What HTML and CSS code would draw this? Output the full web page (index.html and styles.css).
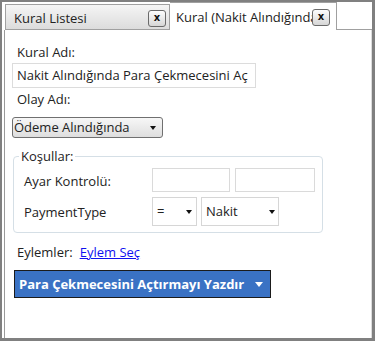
FILE: index.html
```html
<!DOCTYPE html>
<html lang="tr">
<head>
<meta charset="utf-8">
<title>Kural</title>
<link rel="stylesheet" href="styles.css">
</head>
<body>
<div class="window">
  <div class="tabs">
    <div class="tab tab-inactive">
      <span class="tab-title">Kural Listesi</span>
      <span class="tab-close">x</span>
    </div>
    <div class="tab tab-active">
      <span class="tab-title tab-title-clip">Kural (Nakit Alındığında Para Çekmecesini Aç)</span>
      <span class="tab-close">x</span>
    </div>
    <div class="tab-fill"></div>
  </div>
  <div class="panel">
    <div class="label">Kural Adı:</div>
    <div class="textbox">Nakit Alındığında Para Çekmecesini Aç</div>
    <div class="label label-gap">Olay Adı:</div>
    <div class="combo"><span>Ödeme Alındığında</span><span class="arrow"></span></div>
    <fieldset class="group">
      <legend class="group-title">Koşullar:</legend>
      <div class="row">
        <span class="row-label">Ayar Kontrolü:</span>
        <span class="field field-a"></span>
        <span class="field field-b"></span>
      </div>
      <div class="row row-second">
        <span class="row-label">PaymentType</span>
        <span class="mini-select mini-op"><span>=</span><span class="arrow"></span></span>
        <span class="mini-select mini-val"><span>Nakit</span><span class="arrow"></span></span>
      </div>
    </fieldset>
    <div class="actions"><span>Eylemler:</span><a class="link" href="#">Eylem Seç</a></div>
    <div class="action-btn"><span>Para Çekmecesini Açtırmayı Yazdır</span><span class="arrow arrow-white"></span></div>
  </div>
</div>
</body>
</html>
```
FILE: styles.css
```css
* { box-sizing: border-box; }
html, body { margin: 0; padding: 0; background: #fff; }
body {
  font-family: "Open Sans", "Noto Sans", sans-serif;
  font-size: 13px;
  line-height: 17px;
  color: #222;
}
.window {
  width: 375px;
  height: 341px;
  border-style: solid;
  border-color: #808080;
  border-width: 2px 3px 3px 2px;
  padding-left: 2px;
  display: flex;
  flex-direction: column;
  background: #fff;
}
.tabs {
  display: flex;
  align-items: flex-end;
  height: 28px;
  flex: none;
}
.tab {
  display: flex;
  align-items: center;
  border: 1px solid #a0a0a0;
  white-space: nowrap;
}
.tab-inactive {
  margin-left: 1px;
  width: 165px;
  height: 26px;
  background: linear-gradient(#f5f5f5, #dcdcdc);
  padding: 2px 3px 0 8px;
  justify-content: space-between;
}
.tab-active {
  width: 167px;
  height: 28px;
  border-left: none;
  border-bottom: none;
  background: #fff;
  padding: 2px 4px 0 6px;
}
.tab-title-clip {
  width: 136px;
  overflow: hidden;
}
.tab-close {
  width: 18px;
  height: 17px;
  border: 1px solid #6a6a6a;
  border-radius: 3px;
  background: linear-gradient(#fdfdfd, #d6d6d6);
  font-family: "DejaVu Sans", sans-serif;
  font-weight: bold;
  font-size: 10px;
  line-height: 14px;
  text-align: center;
  color: #111;
  flex: none;
}
.tab-fill {
  flex: 1;
  height: 28px;
  border-bottom: 1px solid #a0a0a0;
}
.panel {
  flex: 1;
  border-left: 1px solid #9a9a9a;
  border-right: 1px solid #dcdcdc;
  padding: 14px 0 0 7px;
}
.label {
  padding-left: 5px;
  height: 17px;
}
.label-gap { margin-top: 3px; }
.textbox {
  margin-top: 2px;
  width: 244px;
  height: 25px;
  border: 1px solid #dcdcdc;
  padding-left: 4px;
  display: flex;
  align-items: center;
  white-space: nowrap;
  overflow: hidden;
}
.combo {
  margin-top: 9px;
  width: 151px;
  height: 21px;
  border: 1px solid #707070;
  border-radius: 3px;
  background: linear-gradient(#f7f7f7, #dedede);
  padding: 0 6px 0 1px;
  display: flex;
  align-items: center;
  justify-content: space-between;
}
.arrow {
  width: 0;
  height: 0;
  border-left: 3.5px solid transparent;
  border-right: 3.5px solid transparent;
  border-top: 4px solid #111;
}
.group {
  margin: 10px 0 0 1px;
  width: 310px;
  padding: 3px 0 6px 0;
  border: 1px solid #d5dfe6;
  border-radius: 4px;
  min-width: 0;
}
.group-title {
  margin-left: 5px;
  padding: 0 2px;
}
.row {
  display: flex;
  align-items: center;
  padding-left: 10px;
  height: 24px;
}
.row-second {
  margin-top: 5px;
  height: 29px;
}
.row-label {
  width: 128px;
  padding-top: 2px;
}
.field {
  height: 24px;
  border: 1px solid #dadada;
  background: #fff;
}
.field-a { width: 78px; margin-right: 5px; }
.field-b { width: 80px; }
.mini-select {
  height: 29px;
  border: 1px solid #d6d6d6;
  background: #fff;
  display: flex;
  align-items: center;
  justify-content: space-between;
  padding: 0 4px;
}
.mini-op { width: 45px; margin-right: 4px; }
.mini-val { width: 78px; padding-right: 3px; }
.actions {
  margin-top: 11px;
  padding-left: 5px;
  height: 17px;
}
.link {
  margin-left: 7px;
  color: #1010f0;
  text-decoration: underline;
}
.action-btn {
  margin: 9px 0 0 2px;
  width: 257px;
  height: 28px;
  border: 1px solid #1b1b1b;
  background: #3a72c4;
  color: #fff;
  font-weight: bold;
  padding: 0 7px 0 4px;
  display: flex;
  align-items: center;
  justify-content: space-between;
  white-space: nowrap;
}
.arrow-white {
  border-left-width: 4.5px;
  border-right-width: 4.5px;
  border-top: 5px solid #fff;
}
```
